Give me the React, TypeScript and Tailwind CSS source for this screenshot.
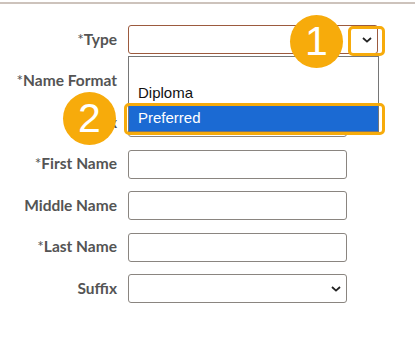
import React from 'react';

const Chevron = ({ className = '' }: { className?: string }) => (
  <svg viewBox="0 0 10 6" className={`w-[10px] h-[6px] ${className}`}>
    <path d="M1 1 L5 4.6 L9 1" fill="none" stroke="#222" strokeWidth="1.8" />
  </svg>
);

const Label = ({ text, required = false }: { text: string; required?: boolean }) => (
  <div className="flex items-center justify-end h-[29px] text-[15.5px] font-bold text-[#545454] whitespace-nowrap">
    {required && <span className="font-normal">*</span>}
    {text}
  </div>
);

const TextBox = () => (
  <div className="w-[219px] h-[29px] border border-[#8a8580] rounded-[3px] bg-white" />
);

const SelectBox = ({ wide = false, border = 'border-[#8a8580]' }: { wide?: boolean; border?: string }) => (
  <div
    className={`${wide ? 'w-[250px]' : 'w-[219px]'} h-[29px] border ${border} rounded-[3px] bg-white flex items-center justify-end pr-[5px]`}
  >
    <Chevron />
  </div>
);

const Badge = ({ n, className }: { n: string; className: string }) => (
  <div
    className={`absolute w-[53px] h-[53px] rounded-full bg-[#f7ab0b] text-white flex items-center justify-center text-[41px] leading-none ${className}`}
    style={{ fontFamily: '"Liberation Sans", Arial, sans-serif' }}
  >
    {n}
  </div>
);

export default function App() {
  const rows = [
    { label: 'Type', required: true, field: <SelectBox wide border="border-[#9c5a3e]" /> },
    { label: 'Name Format', required: true, field: <SelectBox /> },
    { label: 'Prefix', required: false, field: <SelectBox /> },
    { label: 'First Name', required: true, field: <TextBox /> },
    { label: 'Middle Name', required: false, field: <TextBox /> },
    { label: 'Last Name', required: true, field: <TextBox /> },
    { label: 'Suffix', required: false, field: <SelectBox /> },
  ];

  return (
    <div
      className="relative w-[415px] h-[339px] bg-white overflow-hidden"
      style={{ fontFamily: 'Lato, "Liberation Sans", sans-serif' }}
    >
      <div className="mt-[2px] h-[2px] bg-[#cdc3bc]" />

      <div className="pt-[21px] grid grid-cols-[117px_auto] gap-x-[11px] gap-y-[12.5px]">
        {rows.map((r) => (
          <React.Fragment key={r.label}>
            <Label text={r.label} required={r.required} />
            <div>{r.field}</div>
          </React.Fragment>
        ))}
      </div>

      {/* open dropdown list */}
      <div
        className="absolute left-[128px] top-[56px] w-[251px] h-[76px] border border-[#767676] bg-white text-[15px] text-[#111] flex flex-col"
        style={{ fontFamily: '"Liberation Sans", Arial, sans-serif' }}
      >
        <div className="h-[24px]" />
        <div className="h-[25px] flex items-center pl-[9px]">Diploma</div>
        <div className="h-[25px] flex items-center pl-[9px] bg-[#1b6ad3] text-white">Preferred</div>
      </div>

      {/* callout highlights */}
      <div className="absolute left-[348px] top-[26px] w-[37px] h-[30px] border-[3px] border-[#f7ab0b] rounded-[5px]" />
      <div className="absolute left-[124px] top-[103px] w-[261px] h-[32px] border-[3px] border-[#f7ab0b] rounded-[5px]" />

      <Badge n="1" className="left-[290px] top-[15px]" />
      <Badge n="2" className="left-[63px] top-[92px]" />
    </div>
  );
}
